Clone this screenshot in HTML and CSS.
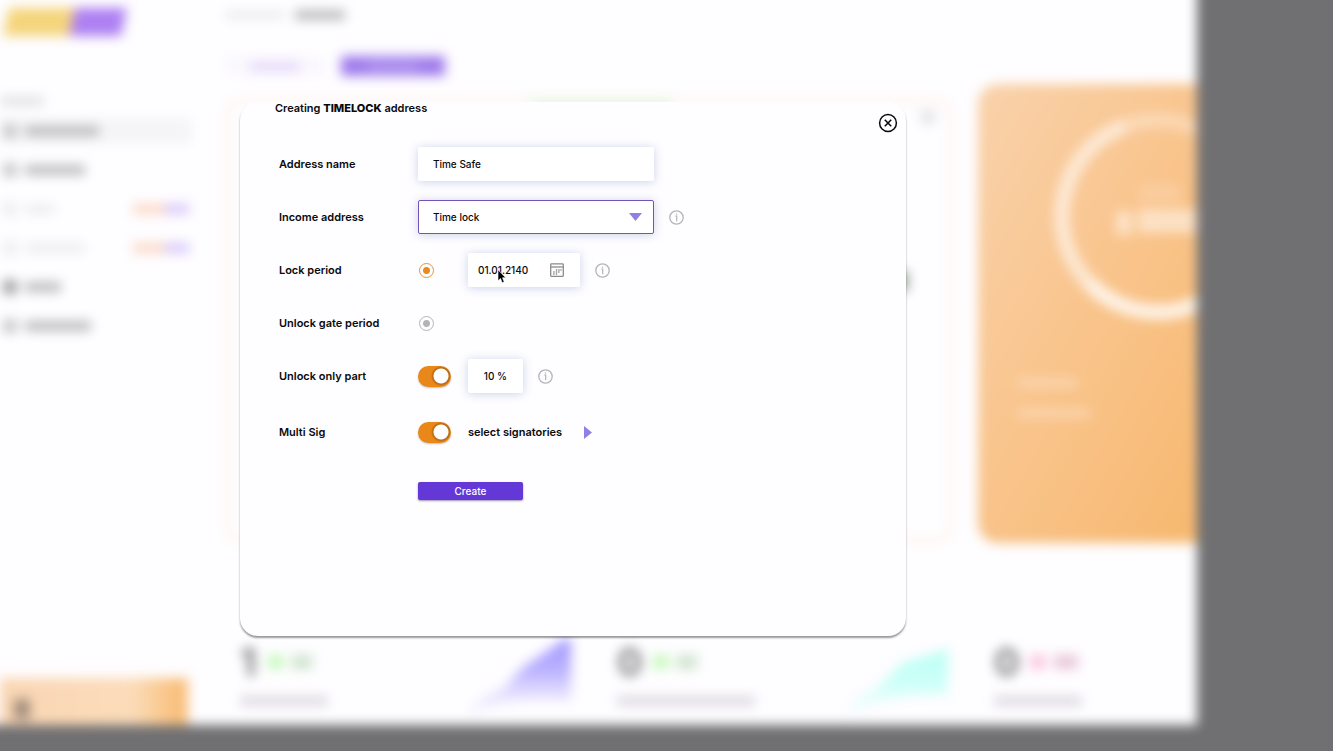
FILE: index.html
```html
<!DOCTYPE html>
<html lang="en">
<head>
<meta charset="utf-8">
<meta name="viewport" content="width=device-width, initial-scale=1">
<title>Creating TIMELOCK address</title>
<link rel="stylesheet" href="styles.css">
</head>
<body>
<div class="app" aria-hidden="true">
  <aside class="sidebar">
    <div class="logo"><span class="logo-a"></span><span class="logo-b"></span></div>
    <div class="nav-title bar"></div>
    <div class="nav">
      <div class="nav-item active"><i class="dot"></i><i class="bar w80"></i></div>
      <div class="nav-item"><i class="dot"></i><i class="bar w60"></i></div>
      <div class="nav-item faint"><i class="dot"></i><i class="bar w30"></i><i class="soon"></i></div>
      <div class="nav-item faint"><i class="dot"></i><i class="bar w60"></i><i class="soon"></i></div>
      <div class="nav-item"><i class="dot dark"></i><i class="bar w40"></i></div>
      <div class="nav-item"><i class="dot"></i><i class="bar w70"></i></div>
    </div>
    <div class="promo"><i class="promo-icon"></i></div>
  </aside>
  <div class="main">
    <div class="crumbs"><i class="bar w60 pale"></i><i class="bar w50"></i></div>
    <div class="tabs"><span class="tab"><i class="tab-text"></i></span><span class="tab on"><i class="tab-text"></i></span></div>
    <div class="cards">
      <div class="panel"><div class="panel-line"></div><i class="panel-dot"></i><i class="panel-mark"></i></div>
      <div class="balance">
        <svg class="ring" viewBox="0 0 220 220" fill="none" stroke-width="15">
          <circle cx="110" cy="110" r="96" stroke="#fff" stroke-opacity=".32"/>
          <path d="M41 177A96 96 0 0 1 77 20" stroke="#fff" stroke-opacity=".42"/>
          <path d="M41 177A96 96 0 0 0 206 110" stroke="#fff" stroke-opacity=".72"/>
          <path d="M92 87H132" stroke="#fff" stroke-opacity=".18" stroke-width="16"/>
          <path d="M68 117H84M90 115H160" stroke="#fff" stroke-opacity=".5" stroke-width="24"/>
        </svg>
        <i class="balance-line"></i><i class="balance-line long"></i>
      </div>
    </div>
    <div class="stats">
      <div class="stat">
        <div class="stat-row"><b class="num">1</b><i class="pill green"></i><i class="pill gray-green"></i></div>
        <i class="bar w90 lilac"></i>
        <svg class="chart" viewBox="0 0 106 80"><defs><linearGradient id="g1" x2="0" y2="1"><stop stop-color="#9d92ff"/><stop offset=".45" stop-color="#bdb5ff"/><stop offset="1" stop-color="#eeeaff" stop-opacity=".2"/></linearGradient></defs><path fill="url(#g1)" d="M0 80Q8 60 38 50L58 28L106-4V62Q30 56 0 80Z"/></svg>
      </div>
      <div class="stat">
        <div class="stat-row"><b class="num zero">0</b><i class="pill green"></i><i class="pill gray-green"></i></div>
        <i class="bar w140 lilac"></i>
        <svg class="chart" viewBox="0 0 106 80"><defs><linearGradient id="g2" x2="0" y2="1"><stop stop-color="#b9fff5"/><stop offset=".5" stop-color="#cefff9"/><stop offset="1" stop-color="#e9fffd" stop-opacity=".4"/></linearGradient></defs><path fill="url(#g2)" d="M0 80Q16 56 34 50L60 24L106 10V56Q34 54 0 80Z"/></svg>
      </div>
      <div class="stat">
        <div class="stat-row"><b class="num zero">0</b><i class="pill pink"></i><i class="pill gray-pink"></i></div>
        <i class="bar w90 lilac"></i>
      </div>
    </div>
  </div>
</div>

<main class="modal" role="dialog" aria-labelledby="title">
  <header class="modal-head">
    <h1 class="title" id="title">Creating <strong>TIMELOCK</strong> address</h1>
    <button class="close" type="button" aria-label="Close">
      <svg viewBox="0 0 20 20" width="20" height="20" fill="none" stroke="#0a0a0a"><circle cx="10" cy="10" r="8.4" stroke-width="1.5"/><path d="M6.8 6.8l6.4 6.4M13.2 6.8l-6.4 6.4" stroke-width="1.6"/></svg>
    </button>
  </header>
  <form class="form">
    <div class="row">
      <label class="label" for="name">Address name</label>
      <input class="field wide" id="name" type="text" value="Time Safe">
    </div>
    <div class="row">
      <label class="label" for="income">Income address</label>
      <div class="select-wrap">
        <select class="field wide outlined" id="income"><option>Time lock</option></select>
        <svg class="arrow" viewBox="0 0 13 8" width="13" height="8"><path d="M0 0h13L6.5 8z" fill="#8f80e3"/></svg>
      </div>
      <button class="info" type="button" aria-label="About income address"><svg viewBox="0 0 15 15" width="15" height="15" fill="none" stroke="#b4b4b6"><circle cx="7.5" cy="7.5" r="6.7" stroke-width="1.3"/><path d="M6.5 6.2h1.2v5M7.5 3.6v1.2" stroke-width="1.2"/></svg></button>
    </div>
    <div class="row">
      <label class="label" for="lock">Lock period</label>
      <div class="slot"><input class="radio" id="lock" type="radio" name="period" checked></div>
      <div class="field date">
        <input class="date-input" type="text" value="01.01.2140" aria-label="Lock date">
        <svg viewBox="0 0 14 14" width="14" height="14" fill="none" stroke="#8b8b8e"><rect x=".7" y=".9" width="12.6" height="12.4" rx=".8" stroke-width="1.3"/><path d="M1 4h12" stroke-width="1.3"/><path d="M5.8 7h1.4M8.2 7h1.4M10.4 7h1.2M3.2 9h1.4M5.8 9h1.4M8.2 9h1.4M3.2 11h1.4M5.8 11h1.4" stroke-width="1.3"/></svg>
        <svg class="pointer" viewBox="0 0 10 15" width="10" height="15"><path d="M1 .8v11l2.5-2.3 1.7 4.2 2-.9-1.7-4h3.300z" fill="#000" stroke="#fff" stroke-width=".6"/></svg>
      </div>
      <button class="info" type="button" aria-label="About lock period"><svg viewBox="0 0 15 15" width="15" height="15" fill="none" stroke="#b4b4b6"><circle cx="7.5" cy="7.5" r="6.7" stroke-width="1.3"/><path d="M6.5 6.2h1.2v5M7.5 3.6v1.2" stroke-width="1.2"/></svg></button>
    </div>
    <div class="row">
      <label class="label" for="gate">Unlock gate period</label>
      <div class="slot"><input class="radio" id="gate" type="radio" name="period"></div>
    </div>
    <div class="row">
      <label class="label" for="part">Unlock only part</label>
      <div class="slot"><input class="toggle" id="part" type="checkbox" checked></div>
      <input class="field percent" type="text" value="10 %" aria-label="Part to unlock">
      <button class="info" type="button" aria-label="About partial unlock"><svg viewBox="0 0 15 15" width="15" height="15" fill="none" stroke="#b4b4b6"><circle cx="7.5" cy="7.5" r="6.7" stroke-width="1.3"/><path d="M6.5 6.2h1.2v5M7.5 3.6v1.2" stroke-width="1.2"/></svg></button>
    </div>
    <div class="row tall">
      <label class="label" for="multi">Multi Sig</label>
      <div class="slot"><input class="toggle" id="multi" type="checkbox" checked></div>
      <button class="signers" type="button">select signatories
        <svg viewBox="0 0 8 13" width="8" height="13"><path d="M0 0l8 6.5L0 13z" fill="#8f80e3"/></svg>
      </button>
    </div>
    <div class="row actions"><button class="create" type="button">Create</button></div>
  </form>
</main>
</body>
</html>
```
FILE: styles.css
```css
* { box-sizing: border-box; }

body {
  margin: 0;
  min-height: 100vh;
  overflow: hidden;
  background: #707072;
  color: #0a0a0c;
  font-family: Inter, "Open Sans", sans-serif;
  font-size: 11px;
}

/* blurred dashboard behind the dialog */
.app {
  display: flex;
  gap: 33px;
  width: calc(89.8vw + 24px);
  height: calc(100vh - 2px);
  margin: -24px 0 0 -24px;
  padding: 24px 0 0 24px;
  overflow: hidden;
  background: #fefdff;
  filter: blur(6px);
}
.sidebar { display: flex; flex-direction: column; flex: 0 0 192px; }
.logo { display: flex; width: 118px; height: 28px; margin: 8px 0 0 6px; transform: skewX(-12deg); }
.logo-a { flex: 5; background: #f5d57c; }
.logo-b { flex: 4; background: #ae80f2; }
.bar { display: block; height: 10px; background: #bbbbbd; }
.nav-title { width: 44px; margin-top: 60px; background: #e3e2e5; }
.nav { display: grid; gap: 13px; margin-top: 12px; }
.nav-item { display: flex; align-items: center; gap: 8px; height: 26px; padding-left: 3px; }
.nav-item.active { background: #f5f4f6; }
.dot { width: 14px; height: 14px; background: #c8c8ca; }
.dot.dark { background: #a09ea2; }
.faint .dot, .faint .bar { background: #ededef; }
.soon { width: 56px; height: 10px; margin: 0 3px 0 auto; background: linear-gradient(90deg, #fbd9c8 55%, #d8c8fa 60%); }
.promo { display: flex; align-items: flex-end; width: 188px; height: 47px; margin-top: auto; padding: 0 14px 6px; background: linear-gradient(90deg, #fad6b4, #fbdcb9 70%, #f9bf7c 95%); }
.promo-icon { width: 16px; height: 20px; background: #a18d7c; }
.w30 { width: 30px; } .w40 { width: 36px; } .w50 { width: 50px; } .w60 { width: 60px; }
.w70 { width: 66px; } .w80 { width: 74px; } .w90 { width: 88px; } .w140 { width: 138px; }
.pale { background: #eeedf0; }
.lilac { background: #dedbe2; }

.main { display: flex; flex-direction: column; flex: 1; min-width: 0; }
.crumbs { display: flex; gap: 10px; padding-top: 10px; }
.tabs { display: flex; gap: 16px; margin-top: 36px; }
.tab { display: grid; place-items: center; width: 100px; height: 20px; background: #faf8fd; }
.tab.on { width: 104px; background: #a07cec; }
.tab-text { width: 50px; height: 9px; background: #e4d8fa; }
.on .tab-text { background: #b094ef; }
.cards { display: grid; grid-template-columns: 728fr 219fr; gap: 25px; height: 459px; margin-top: 8px; }
.panel { display: flex; flex-direction: column; align-items: flex-end; margin-top: 14px; padding-right: 12px; border: 5px solid #fdf5ed; border-radius: 18px; }
.panel-line { width: 140px; height: 3px; margin-right: 265px; background: #a8f5a4; }
.panel-dot { width: 16px; height: 16px; margin-top: 3px; border-radius: 50%; background: #e4e3e7; }
.panel-mark { width: 20px; height: 20px; margin: 146px 28px 0 0; background: #9aa49a; }
.balance { overflow: hidden; border-radius: 20px 0 0 20px; background: linear-gradient(120deg, #f9d2ab, #f9c48c 50%, #f7b86f); }
.ring { display: block; width: 220px; margin: 22px 0 0 70px; }
.balance-line { display: block; width: 60px; height: 10px; margin: 52px 0 0 40px; background: #fad4ac; }
.balance-line.long { width: 72px; margin-top: 20px; }
.stats { display: grid; grid-template-columns: minmax(0, 377fr) minmax(0, 377fr) minmax(0, 203fr); margin-top: 97px; padding-left: 15px; }
.stat { display: grid; grid-template-columns: 225px 106px; grid-template-rows: 44px 34px; align-items: center; }
.stat-row { display: flex; align-items: center; gap: 8px; }
.num { width: 20px; color: #78777a; font-size: 38px; line-height: 40px; }
.zero { width: 28px; }
.stat > .bar { grid-row: 2; }
.chart { grid-column: 2; grid-row: 1 / 3; width: 106px; height: 80px; }
.pill { width: 16px; height: 14px; background: #c6fabc; }
.gray-green { width: 20px; background: #cfe3ce; }
.pink { background: #fbc6dd; }
.gray-pink { width: 24px; background: #e9c8d8; }

/* dialog */
.modal {
  position: absolute;
  top: 102px;
  left: 18vw;
  width: 50vw;
  min-width: 480px;
  padding-bottom: 136px;
  border-radius: 18px;
  background: #fefdff;
  box-shadow: 0 2px 2px rgba(0, 0, 0, .4);
}
.modal-head { display: flex; justify-content: space-between; padding: 0 8px 0 35px; }
.title { margin: 0; font-size: 11px; font-weight: 600; line-height: 13px; }
.title strong { font-weight: 800; }
button { margin: 0; padding: 0; border: 0; background: none; color: inherit; font: inherit; }
.close { width: 20px; height: 20px; margin-top: 11px; }
.close svg, .info svg { display: block; }
.form { display: grid; gap: 19px; padding: 14px 39px 0; }
.row { display: flex; align-items: center; height: 34px; }
.row.tall { height: 40px; }
.label { flex: 0 0 139px; font-weight: 600; }
.slot { display: flex; align-items: center; flex: 0 0 50px; }
.field {
  height: 34px;
  padding: 0 15px;
  border: 0;
  border-radius: 2px;
  background: #fff;
  box-shadow: 0 1px 10px rgba(130, 155, 205, .42);
  color: inherit;
  font: 500 10px Inter, "Open Sans", sans-serif;
}
.wide { width: 236px; }
.outlined { padding: 0 14px; border: 1px solid #7652b8; appearance: none; }
.select-wrap { position: relative; display: flex; }
.arrow { position: absolute; top: 13px; right: 12px; pointer-events: none; }
.info { width: 15px; height: 15px; margin-left: 15px; }
.radio { width: 15px; height: 15px; margin: 0 1px; border: 1px solid #b4b4b6; border-radius: 50%; background: radial-gradient(circle, #b4b4b6 3px, transparent 4px); appearance: none; }
.radio:checked { border-color: #e5943a; background: radial-gradient(circle, #e88a22 3px, transparent 4px); }
.date { position: relative; display: flex; align-items: center; justify-content: space-between; width: 112px; padding: 0 16px 0 10px; }
.date-input { width: 60px; padding: 0; border: 0; background: none; color: inherit; font: inherit; }
.pointer { position: absolute; top: 16px; left: 29px; }
.percent { width: 55px; padding: 0; text-align: center; }
.toggle { width: 33px; height: 21px; margin: 0; border-radius: 11px; background: radial-gradient(circle at 23px 10px, #fff 7px, rgba(130, 70, 5, .5) 8px, transparent 10px), #e98718; box-shadow: 0 1px 2px rgba(0, 0, 0, .25); appearance: none; }
.signers { display: flex; align-items: center; gap: 22px; font-weight: 600; }
.actions { height: 18px; margin-top: 11px; padding-left: 139px; }
.create { width: 105px; height: 18px; border-radius: 2px; background: #6438d6; box-shadow: 0 1px 2px rgba(60, 40, 110, .5); color: #fff; font-size: 10px; font-weight: 500; }
```
